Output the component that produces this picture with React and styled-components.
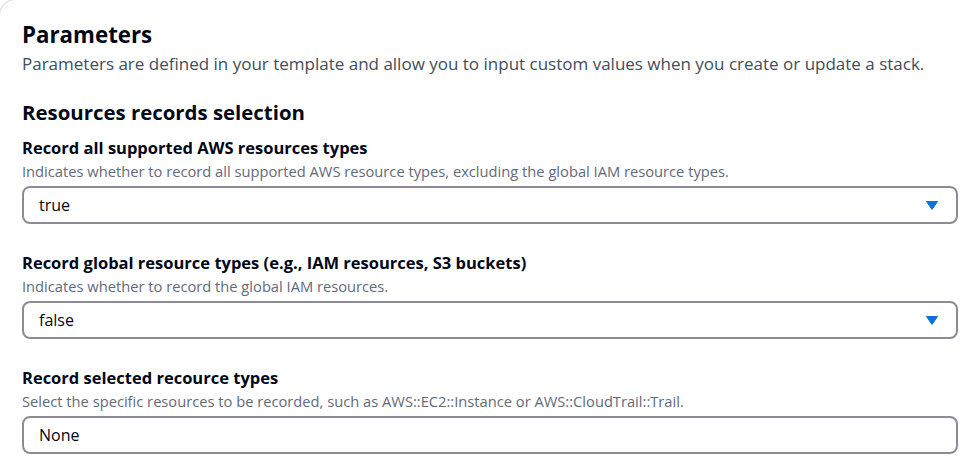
import React from "react";
import styled, { createGlobalStyle } from "styled-components";

const Global = createGlobalStyle`
  html, body { margin: 0; padding: 0; background: #ffffff; }
  body { font-family: "Open Sans", "Noto Sans", Arial, sans-serif; color: #000716; }
  * { box-sizing: border-box; }
`;

const Card = styled.section`
  width: 973px;
  min-height: 473px;
  background: #fff;
  border-top-left-radius: 16px;
  box-shadow: -1px -1px 1px rgba(0, 7, 22, 0.12);
  padding: 20px 15px 0 22px;
  display: flex;
  flex-direction: column;
`;

const Title = styled.h1`
  margin: 0;
  font-size: 22.3px;
  line-height: 30px;
  font-weight: 700;
  color: #000716;
`;

const Intro = styled.p`
  margin: 3px 0 0;
  font-size: 17px;
  line-height: 21px;
  color: #414d5c;
`;

const SectionTitle = styled.h2`
  margin: 26px 0 0;
  font-size: 20.4px;
  line-height: 24px;
  font-weight: 700;
  color: #000716;
`;

const FieldList = styled.div`
  margin-top: 13px;
  display: flex;
  flex-direction: column;
  gap: 28px;
`;

const Field = styled.div`
  display: flex;
  flex-direction: column;
`;

const Label = styled.label`
  font-size: 16.5px;
  line-height: 22px;
  font-weight: 700;
  color: #000716;
`;

const Hint = styled.div`
  margin-top: 2px;
  font-size: 14.7px;
  line-height: 20px;
  color: #5f6b7a;
`;

const Box = styled.div`
  margin-top: 5px;
  height: 38px;
  border: 2px solid #8c8c94;
  border-radius: 8px;
  padding: 0 18px 0 15px;
  display: flex;
  align-items: center;
  justify-content: space-between;
  font-size: 16px;
  color: #000716;
`;

const Caret = () => (
  <svg width="12" height="9" viewBox="0 0 12 9" aria-hidden="true">
    <path d="M0.5 0.5h11L6 8.5z" fill="#0972d3" stroke="#0972d3" strokeWidth="1" strokeLinejoin="round" />
  </svg>
);

const fields = [
  {
    label: "Record all supported AWS resources types",
    hint: "Indicates whether to record all supported AWS resource types, excluding the global IAM resource types.",
    value: "true",
    select: true,
  },
  {
    label: "Record global resource types (e.g., IAM resources, S3 buckets)",
    hint: "Indicates whether to record the global IAM resources.",
    value: "false",
    select: true,
  },
  {
    label: "Record selected recource types",
    hint: "Select the specific resources to be recorded, such as AWS::EC2::Instance or AWS::CloudTrail::Trail.",
    value: "None",
    select: false,
  },
];

export default function App() {
  return (
    <>
      <Global />
      <Card>
        <Title>Parameters</Title>
        <Intro>
          Parameters are defined in your template and allow you to input custom values when you create or update a stack.
        </Intro>
        <SectionTitle>Resources records selection</SectionTitle>
        <FieldList>
          {fields.map((f) => (
            <Field key={f.label}>
              <Label>{f.label}</Label>
              <Hint>{f.hint}</Hint>
              <Box>
                <span>{f.value}</span>
                {f.select && <Caret />}
              </Box>
            </Field>
          ))}
        </FieldList>
      </Card>
    </>
  );
}
